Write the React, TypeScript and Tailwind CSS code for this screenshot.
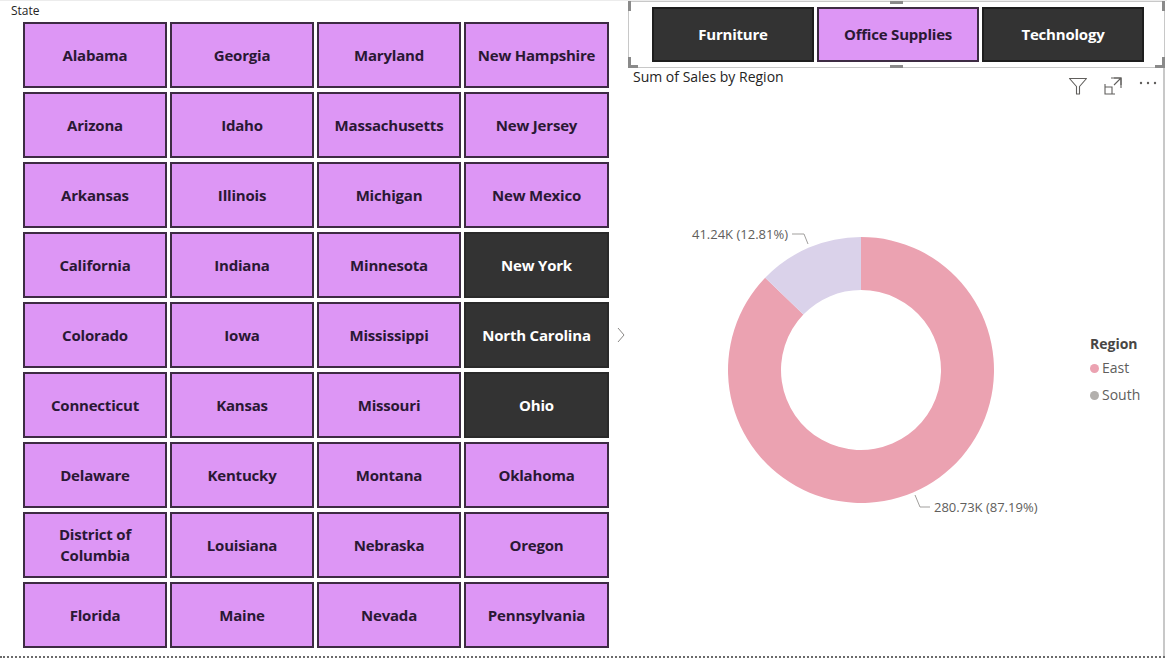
import { ReactNode } from "react";

const states = [
  ["Alabama", "Georgia", "Maryland", "New Hampshire"],
  ["Arizona", "Idaho", "Massachusetts", "New Jersey"],
  ["Arkansas", "Illinois", "Michigan", "New Mexico"],
  ["California", "Indiana", "Minnesota", "New York"],
  ["Colorado", "Iowa", "Mississippi", "North Carolina"],
  ["Connecticut", "Kansas", "Missouri", "Ohio"],
  ["Delaware", "Kentucky", "Montana", "Oklahoma"],
  ["District of Columbia", "Louisiana", "Nebraska", "Oregon"],
  ["Florida", "Maine", "Nevada", "Pennsylvania"],
];

const selected = ["New York", "North Carolina", "Ohio"];

const Tile = ({ label, active }: { label: string; active: boolean }) => (
  <div
    className={`flex items-center justify-center text-center px-2 leading-[21px] text-[15px] font-bold tracking-[-0.2px] border-2 ${
      active
        ? "bg-[#333333] border-[#2a2a2a] text-white"
        : "bg-[#dd96f5] border-[#3d2b43] text-[#2a1834]"
    }`}
  >
    {label === "District of Columbia" ? (
      <span>
        District of
        <br />
        Columbia
      </span>
    ) : (
      label
    )}
  </div>
);

const Handle = ({ className }: { className: string }) => (
  <div className={`absolute bg-[#8a8a8a] ${className}`} />
);

const IconBtn = ({ children }: { children: ReactNode }) => (
  <div className="w-[20px] h-[20px] flex items-center justify-center">{children}</div>
);

export default function App() {
  return (
    <div
      className="w-[1167px] h-[662px] bg-white overflow-hidden border-t border-[#ececec]"
      style={{ fontFamily: "'Open Sans', 'Noto Sans', sans-serif" }}
    >
      <div className="w-[1165px] h-[657px] flex border-b-2 border-dotted border-[#6b6b6b]">
        {/* State slicer */}
        <div className="w-[628px] flex flex-col">
          <div className="pl-[11px] pt-[2px] h-[21px] text-[12px] text-[#252423] leading-[16px]">State</div>
          <div className="flex items-center">
            <div className="ml-[23px] grid grid-cols-[144px_144px_144px_145px] auto-rows-[66px] gap-x-[3px] gap-y-[4px]">
              {states.flat().map((s) => (
                <Tile key={s} label={s} active={selected.includes(s)} />
              ))}
            </div>
            <svg width="12" height="16" viewBox="0 0 12 16" className="ml-[6px]">
              <path d="M3 1 L9 8 L3 15" fill="none" stroke="#8a8886" strokeWidth="1" />
            </svg>
          </div>
        </div>

        {/* Right side */}
        <div className="w-[537px] flex flex-col">
          {/* Category slicer */}
          <div className="relative h-[67px] border border-[#c8c8c8] pl-[23px] pt-[5px] flex gap-[3px]">
            {["Furniture", "Office Supplies", "Technology"].map((c) => (
              <div
                key={c}
                className={`w-[162px] h-[55px] flex items-center justify-center text-[15px] font-bold tracking-[-0.2px] border-2 ${
                  c === "Office Supplies"
                    ? "bg-[#dd96f5] border-[#3d2b43] text-[#2a1834]"
                    : "bg-[#333333] border-[#1e1e1e] text-white"
                }`}
              >
                {c}
              </div>
            ))}
            <Handle className="-left-px -top-px w-[3px] h-[10px]" />
            <Handle className="-left-px top-[55px] w-[3px] h-[11px]" />
            <Handle className="-left-px top-[63px] w-[10px] h-[3px]" />
            <Handle className="-right-px -top-px w-[3px] h-[10px]" />
            <Handle className="-right-px top-[55px] w-[3px] h-[11px]" />
            <Handle className="-right-px top-[63px] w-[10px] h-[3px]" />
            <Handle className="left-[261px] -top-px w-[13px] h-[3px]" />
            <Handle className="left-[261px] top-[63px] w-[13px] h-[3px]" />
          </div>

          {/* Donut chart visual */}
          <div className="flex-1 border-r-2 border-[#c8c8c8] flex flex-col">
            <div className="flex justify-between items-start h-[32px]">
              <div className="pl-[5px] text-[14px] text-[#252423] leading-[18px]">Sum of Sales by Region</div>
              <div className="flex gap-[15px] pt-[8px] pr-[5px]">
                <IconBtn>
                  <svg width="20" height="20" viewBox="0 0 20 20">
                    <path d="M1.5 2.5 H18.5 L11.5 10.5 V18 H8.5 V10.5 Z" fill="none" stroke="#605e5c" strokeWidth="1.1" strokeLinejoin="round" />
                  </svg>
                </IconBtn>
                <IconBtn>
                  <svg width="20" height="20" viewBox="0 0 20 20">
                    <path d="M2 8 V18 H12" fill="none" stroke="#605e5c" strokeWidth="1.1" />
                    <path d="M2 11 H9 V18" fill="none" stroke="#605e5c" strokeWidth="1.1" />
                    <path d="M8 2 H18 V12" fill="none" stroke="#605e5c" strokeWidth="1.1" />
                    <path d="M11 2 H18 V9 M18 2 L11 9" fill="none" stroke="#605e5c" strokeWidth="1.1" />
                  </svg>
                </IconBtn>
                <IconBtn>
                  <svg width="20" height="20" viewBox="0 0 20 20">
                    <circle cx="3" cy="7" r="1.2" fill="#605e5c" />
                    <circle cx="10" cy="7" r="1.2" fill="#605e5c" />
                    <circle cx="17" cy="7" r="1.2" fill="#605e5c" />
                  </svg>
                </IconBtn>
              </div>
            </div>

            <div className="flex flex-1">
              <svg width="458" height="556" viewBox="0 0 458 556" className="shrink-0">
                <path
                  d="M233 137 A133 133 0 1 1 137.17 177.78 L175.36 214.53 A80 80 0 1 0 233 190 Z"
                  fill="#eba2b1"
                />
                <path
                  d="M137.17 177.78 A133 133 0 0 1 233 137 L233 190 A80 80 0 0 0 175.36 214.53 Z"
                  fill="#dad2ea"
                />
                <path d="M164 134 H176 L180 144" fill="none" stroke="#a19f9d" strokeWidth="1" />
                <path d="M287 395 L292 407 H302" fill="none" stroke="#a19f9d" strokeWidth="1" />
                <text x="160" y="139" textAnchor="end" fontSize="13" fill="#605e5c" fontFamily="'Open Sans', sans-serif">
                  41.24K (12.81%)
                </text>
                <text x="306" y="412" fontSize="13" fill="#605e5c" fontFamily="'Open Sans', sans-serif">
                  280.73K (87.19%)
                </text>
              </svg>
              <div className="pl-[4px] pt-[235px] flex flex-col">
                <div className="text-[14px] font-bold text-[#484644] leading-[18px]">Region</div>
                <div className="flex items-center gap-[3px] mt-[6px] text-[14px] text-[#605e5c] leading-[18px]">
                  <span className="w-[9px] h-[9px] rounded-full bg-[#eba2b1]" />
                  East
                </div>
                <div className="flex items-center gap-[3px] mt-[9px] text-[14px] text-[#605e5c] leading-[18px]">
                  <span className="w-[9px] h-[9px] rounded-full bg-[#b3b0ad]" />
                  South
                </div>
              </div>
            </div>
          </div>
        </div>
      </div>
    </div>
  );
}
